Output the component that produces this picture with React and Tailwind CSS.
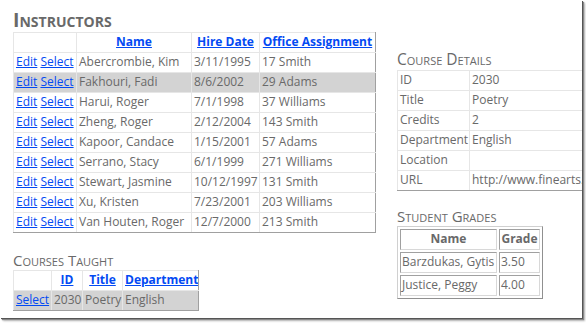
import React from "react";

const link = "text-[#034af3] underline";

function Cell({ children, last, lastRow, sel, className = "" }) {
  return (
    <td
      className={
        "border border-[#e6e6e6] h-[20px] px-[2px] py-0 whitespace-nowrap overflow-hidden " +
        (last ? "border-r-[#a0a0a0] " : "") +
        (lastRow ? "border-b-[#a0a0a0] " : "") +
        (sel ? "bg-[#d3d3d3] " : "") +
        className
      }
    >
      {children}
    </td>
  );
}

const instructors = [
  ["Abercrombie, Kim", "3/11/1995", "17 Smith"],
  ["Fakhouri, Fadi", "8/6/2002", "29 Adams"],
  ["Harui, Roger", "7/1/1998", "37 Williams"],
  ["Zheng, Roger", "2/12/2004", "143 Smith"],
  ["Kapoor, Candace", "1/15/2001", "57 Adams"],
  ["Serrano, Stacy", "6/1/1999", "271 Williams"],
  ["Stewart, Jasmine", "10/12/1997", "131 Smith"],
  ["Xu, Kristen", "7/23/2001", "203 Williams"],
  ["Van Houten, Roger", "12/7/2000", "213 Smith"],
];

const details = [
  ["ID", "2030"],
  ["Title", "Poetry"],
  ["Credits", "2"],
  ["Department", "English"],
  ["Location", ""],
  ["URL", "http://www.finearts.com/poetry"],
];

function Heading({ children, className = "" }) {
  return (
    <div className={"[font-variant:small-caps] text-[#696969] leading-none " + className}>
      {children}
    </div>
  );
}

const gradeCell =
  "h-[21px] p-0 px-[1px] border border-t-[#a0a0a0] border-l-[#a0a0a0] border-r-[#d8d8d8] border-b-[#d8d8d8] whitespace-nowrap";

export default function App() {
  return (
    <div className="w-[586px] h-[323px] bg-white font-['Open_Sans',sans-serif] text-[12px] text-[#696969]">
      <div className="w-[582px] h-[318px] bg-white overflow-hidden flex shadow-[1px_1px_0_#555,2px_2px_1px_#888,3px_3px_2px_#bbb]">
        {/* left column */}
        <div className="pl-[13px] w-[397px] shrink-0 flex flex-col">
          <Heading className="text-[19.5px] font-bold pt-[10px] mb-[2px]">Instructors</Heading>
          <table className="border-collapse table-fixed w-[362px]">
            <colgroup>
              <col className="w-[63px]" />
              <col className="w-[115px]" />
              <col className="w-[68px]" />
              <col className="w-[116px]" />
            </colgroup>
            <tbody>
              <tr>
                <Cell></Cell>
                <Cell className="text-center font-bold"><span className={link}>Name</span></Cell>
                <Cell className="text-center font-bold"><span className={link}>Hire Date</span></Cell>
                <Cell last className="text-center font-bold"><span className={link}>Office Assignment</span></Cell>
              </tr>
              {instructors.map((r, i) => {
                const sel = i === 1;
                const lr = i === instructors.length - 1;
                return (
                  <tr key={i}>
                    <Cell sel={sel} lastRow={lr}>
                      <span className={link}>Edit</span> <span className={link}>Select</span>
                    </Cell>
                    <Cell sel={sel} lastRow={lr}>{r[0]}</Cell>
                    <Cell sel={sel} lastRow={lr}>{r[1]}</Cell>
                    <Cell sel={sel} lastRow={lr} last>{r[2]}</Cell>
                  </tr>
                );
              })}
            </tbody>
          </table>

          <Heading className="text-[15px] mt-[20px] mb-[2px]">Courses Taught</Heading>
          <table className="border-collapse table-fixed w-[185px]">
            <colgroup>
              <col className="w-[38px]" />
              <col className="w-[31px]" />
              <col className="w-[40px]" />
              <col className="w-[76px]" />
            </colgroup>
            <tbody>
              <tr>
                <Cell></Cell>
                <Cell className="text-center font-bold"><span className={link}>ID</span></Cell>
                <Cell className="text-center font-bold"><span className={link}>Title</span></Cell>
                <Cell last className="text-center font-bold"><span className={link}>Department</span></Cell>
              </tr>
              <tr>
                <Cell sel lastRow><span className={link}>Select</span></Cell>
                <Cell sel lastRow>2030</Cell>
                <Cell sel lastRow>Poetry</Cell>
                <Cell sel lastRow last>English</Cell>
              </tr>
            </tbody>
          </table>
        </div>

        {/* right column */}
        <div className="flex flex-col">
          <Heading className="text-[15.5px] pt-[52px] mb-[2px]">Course Details</Heading>
          <table className="border-collapse table-fixed w-[240px]">
            <colgroup>
              <col className="w-[72px]" />
              <col className="w-[168px]" />
            </colgroup>
            <tbody>
              {details.map((r, i) => (
                <tr key={i}>
                  <Cell lastRow={i === details.length - 1}>{r[0]}</Cell>
                  <Cell lastRow={i === details.length - 1}>{r[1]}</Cell>
                </tr>
              ))}
            </tbody>
          </table>

          <Heading className="text-[15px] mt-[18px] mb-[2px]">Student Grades</Heading>
          <table className="border-separate border-spacing-[2px] border border-t-[#d0d0d0] border-l-[#d0d0d0] border-r-[#909090] border-b-[#909090] w-[146px]">
            <tbody>
              <tr>
                <th className={gradeCell + " w-[97px] font-bold text-center"}>Name</th>
                <th className={gradeCell + " font-bold text-center"}>Grade</th>
              </tr>
              {[["Barzdukas, Gytis", "3.50"], ["Justice, Peggy", "4.00"]].map((r, i) => (
                <tr key={i}>
                  <td className={gradeCell}>{r[0]}</td>
                  <td className={gradeCell}>{r[1]}</td>
                </tr>
              ))}
            </tbody>
          </table>
        </div>
      </div>
    </div>
  );
}
